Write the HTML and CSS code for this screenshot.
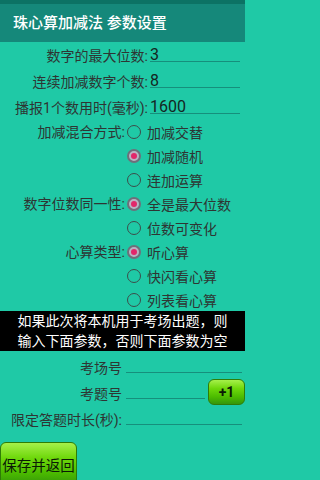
FILE: index.html
```html
<!DOCTYPE html>
<html>
<head>
<meta charset="utf-8">
<link rel="stylesheet" href="styles.css">
</head>
<body>
<div class="status"></div>
<div class="appbar">珠心算加减法 参数设置</div>
<div class="content">
  <div class="row">
    <div class="label l148">数字的最大位数:</div>
    <div class="field">3</div>
  </div>
  <div class="row">
    <div class="label l148">连续加减数字个数:</div>
    <div class="field">8</div>
  </div>
  <div class="row">
    <div class="label l148">播报1个数用时(毫秒):</div>
    <div class="field">1600</div>
  </div>

  <div class="group">
    <div class="glabel">加减混合方式:</div>
    <div class="options">
      <div class="opt"><span class="radio"></span>加减交替</div>
      <div class="opt"><span class="radio on"></span>加减随机</div>
      <div class="opt"><span class="radio"></span>连加运算</div>
    </div>
  </div>
  <div class="group">
    <div class="glabel">数字位数同一性:</div>
    <div class="options">
      <div class="opt"><span class="radio on"></span>全是最大位数</div>
      <div class="opt"><span class="radio"></span>位数可变化</div>
    </div>
  </div>
  <div class="group">
    <div class="glabel">心算类型:</div>
    <div class="options">
      <div class="opt"><span class="radio on"></span>听心算</div>
      <div class="opt"><span class="radio"></span>快闪看心算</div>
      <div class="opt"><span class="radio"></span>列表看心算</div>
    </div>
  </div>

  <div class="notice">如果此次将本机用于考场出题，则<br>输入下面参数，否则下面参数为空</div>

  <div class="exam">
    <div class="erow">
      <div class="label l122">考场号</div>
      <div class="efield wide"></div>
    </div>
    <div class="erow">
      <div class="label l122">考题号</div>
      <div class="efield short"></div>
      <button class="gbtn plus">+1</button>
    </div>
    <div class="erow">
      <div class="label l122">限定答题时长(秒):</div>
      <div class="efield wide"></div>
    </div>
  </div>

  <button class="gbtn save">保存并返回</button>
</div>
</body>
</html>
```

FILE: styles.css
```css
* { box-sizing: border-box; }
html {
  background: #1fc9a6;
}
body {
  margin: 0;
  padding: 0;
  width: 245px;
  height: 480px;
  overflow: hidden;
  background: #1fc9a6;
  font-family: Roboto, "Noto Sans CJK SC", sans-serif;
}
.status {
  height: 4px;
  background: #0c7264;
}
.appbar {
  height: 38px;
  background: #15887a;
  color: #ffffff;
  font-size: 15px;
  font-weight: 500;
  line-height: 38px;
  padding-left: 13px;
}
.content {
  display: flex;
  flex-direction: column;
}
.row {
  display: flex;
  align-items: center;
  height: 26px;
}
.label {
  font-size: 14px;
  color: #2e3533;
  text-align: right;
  white-space: nowrap;
  flex: none;
}
.l148 { width: 148px; }
.l122 { width: 122px; }
.field {
  margin-left: 2px;
  width: 90px;
  height: 14px;
  line-height: 14px;
  border-bottom: 1px solid #168f7c;
  font-size: 16px;
  color: #142622;
}
.group {
  display: flex;
  align-items: flex-start;
}
.glabel {
  width: 125px;
  height: 24px;
  line-height: 24px;
  text-align: right;
  font-size: 14px;
  color: #2e3533;
  flex: none;
}
.options {
  display: flex;
  flex-direction: column;
}
.opt {
  display: flex;
  align-items: center;
  height: 24px;
  font-size: 14px;
  color: #2e3533;
}
.radio {
  width: 14px;
  height: 14px;
  border-radius: 50%;
  border: 1.6px solid #3c4d4a;
  margin-left: 2px;
  margin-right: 6px;
  flex: none;
  display: flex;
  align-items: center;
  justify-content: center;
}
.radio.on {
  border: 2px solid #6e6f7a;
  background: #b9b3c2;
}
.radio.on::after {
  content: "";
  width: 6px;
  height: 6px;
  border-radius: 50%;
  background: #e2266a;
}
.notice {
  background: #000000;
  color: #ffffff;
  font-size: 14px;
  line-height: 20px;
  height: 40px;
  text-align: center;
  margin-top: -1px;
}
.exam {
  display: flex;
  flex-direction: column;
  margin-top: 3px;
}
.erow {
  display: flex;
  align-items: center;
  height: 26px;
}
.efield {
  margin-left: 4px;
  height: 1px;
  background: #168f7c;
  margin-top: 11px;
}
.efield.wide { width: 116px; }
.efield.short { width: 79px; }
.gbtn {
  font-family: Roboto, "Noto Sans CJK SC", sans-serif;
  color: #0b1a05;
  border: 1px solid #2f7d06;
  border-radius: 6px;
  background: linear-gradient(#a6f04a 0%, #6fd80c 35%, #4cbc00 70%, #35960a 100%);
  padding: 0;
  cursor: pointer;
}
.plus {
  margin-left: 3px;
  width: 37px;
  height: 26px;
  font-size: 14px;
  font-weight: bold;
  margin-top: -2px;
}
.save {
  align-self: flex-start;
  margin-top: 10px;
  width: 77px;
  height: 44px;
  font-size: 14.5px;
  text-align: center;
}
```
